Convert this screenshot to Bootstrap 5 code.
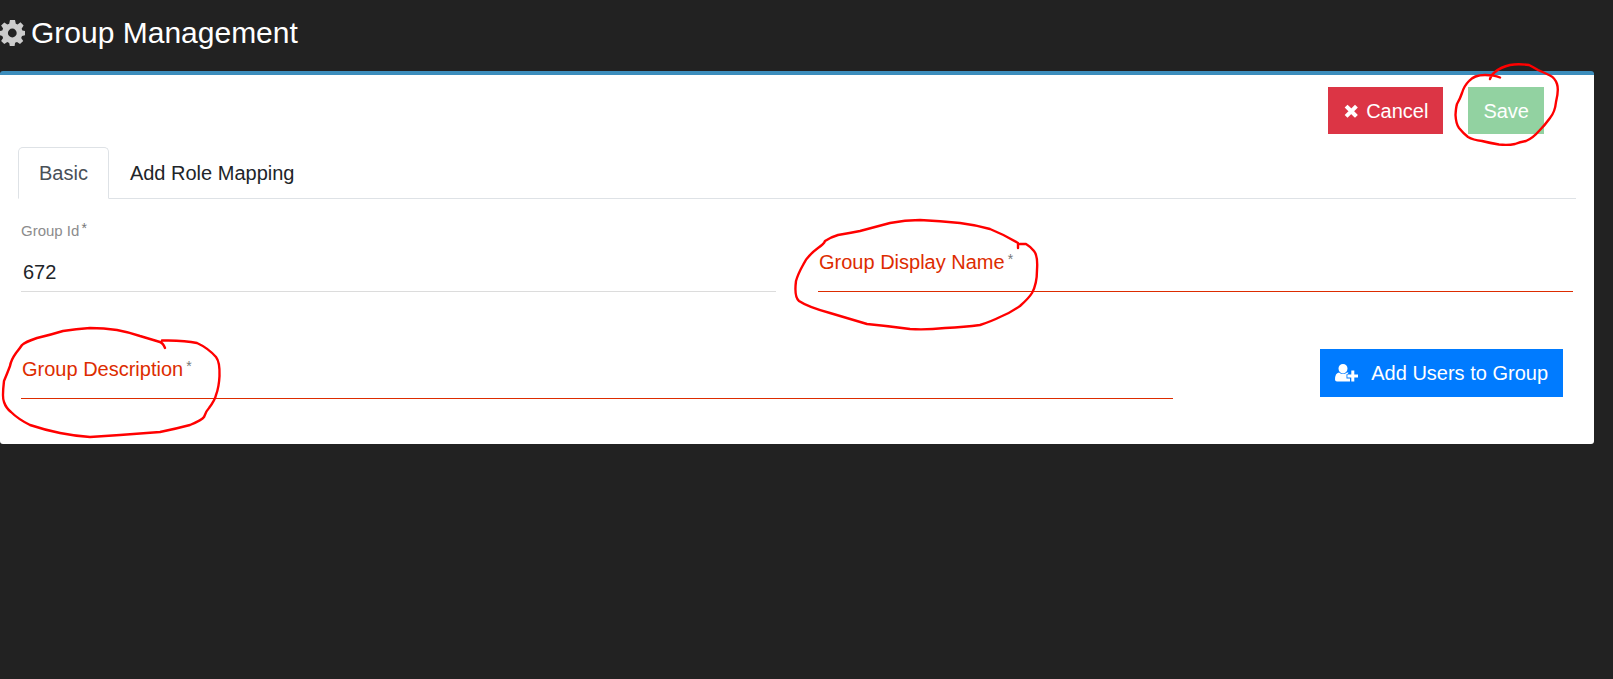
<!DOCTYPE html>
<html lang="en">
<head>
<meta charset="utf-8">
<meta name="viewport" content="width=device-width, initial-scale=1">
<title>Group Management</title>
<link href="https://cdn.jsdelivr.net/npm/bootstrap@5.3.0/dist/css/bootstrap.min.css" rel="stylesheet">
<style>
  body { background: #222; font-family: "Liberation Sans", Arial, sans-serif; font-size: 20px; line-height: 30px; color: #212529; overflow-x: hidden; }
  .page-title { font-size: 30px; line-height: 40px; color: #fff; padding: 13px 0 18px; gap: 6px; }
  .panel { background: #fff; border-top: 4px solid #3c8dbc; border-radius: 3px; margin-right: 19px; padding: 12px 18px 45px; }
  .toolbar { gap: 25px; padding-right: 32px; margin-bottom: 13px; }
  .btn { --bs-btn-font-size: 20px; --bs-btn-line-height: 30px; --bs-btn-padding-x: 14px; --bs-btn-padding-y: 8px; --bs-btn-border-radius: 0; }
  .toolbar .btn { height: 47px; }
  .btn-danger { --bs-btn-bg: #dc3545; --bs-btn-border-color: #dc3545; gap: 7px; }
  .btn-success { --bs-btn-disabled-bg: #28a745; --bs-btn-disabled-border-color: #28a745; --bs-btn-disabled-opacity: .5; }
  .btn-primary { --bs-btn-bg: #007bff; --bs-btn-border-color: #007bff; }
  .nav-tabs { --bs-nav-link-padding-x: 20px; --bs-nav-link-padding-y: 10px; --bs-nav-link-color: #212529; --bs-nav-tabs-border-radius: 5px; --bs-nav-tabs-link-active-color: #495057; }
  .fields { padding: 0 3px; }
  .pair { gap: 42px; }
  .field { padding-top: 57px; }
  .field input { display: block; width: 100%; height: 36px; padding: 0 2px 2px; border: 0; border-bottom: 1px solid #dcdcdc; background: none; outline: 0; color: #212529; }
  .field label { position: absolute; left: 1px; top: 48px; color: #dd2c00; }
  .field label.floated { left: 0; top: 17px; font-size: 15px; color: #8c8c8c; }
  .field .missing { border-color: #dd2c00; }
  .req { font-size: 14px; line-height: 1; vertical-align: 5px; color: #777; margin-left: 3px; }
  .floated .req { vertical-align: 3px; margin-left: 2px; }
  .description-row { margin-top: 14px; }
  .description { flex: 0 0 74.25%; }
  .add-users { margin: 0 10px 2px 0; }
  .pen { position: absolute; pointer-events: none; overflow: visible; fill: none; stroke: #f00; stroke-width: 2.4; stroke-linejoin: round; stroke-linecap: round; }
  .pen-save { left: -18px; top: -27px; }
  .pen-name { left: -28px; top: 10px; }
  .pen-description { left: -21px; top: 14px; }
</style>
</head>
<body>
<header>
  <h1 class="page-title d-flex align-items-center m-0 fw-normal">
    <svg width="25" height="26" viewBox="0 0 25 26" fill="#ccc" aria-hidden="true"><path fill-rule="evenodd" d="M10 0h5l.8 3.700 1.800.8L20.500 2.300l3.100 3.300-2 3.200.8 1.700 2.600.6v4.200l-3 .7-.8 1.900 2 3.100-3.200 3-3-2-1.900.8L14.600 26h-4.800l-.6-3.100-1.900-.8-3 1.900-3.200-3 2-3.100-.8-2-2.300-.6v-4.200l2.300-.6.8-1.900-2-3 3.200-3.100 3 2 1.900-.8zM12.300 8.600a4.400 4.400 0 1 0 0 8.800a4.400 4.400 0 1 0 0-8.800z"/></svg>
    Group Management
  </h1>
</header>
<main class="panel">
  <div class="toolbar d-flex justify-content-end">
    <button type="button" class="btn btn-danger d-flex align-items-center"><svg width="16" height="14" viewBox="0 0 16 14" aria-hidden="true"><path d="M4.500 3.500l7.500 7.500M12 3.500l-7.500 7.500" stroke="#fff" stroke-width="4" stroke-linecap="square"/></svg>Cancel</button>
    <div class="position-relative">
      <button type="button" class="btn btn-success" disabled>Save</button>
      <svg class="pen pen-save" width="115" height="90" viewBox="1450 60 115 90" aria-hidden="true"><path d="M1500 77.500Q1494 75 1485 75Q1474 75 1469 81Q1464 86 1462 93Q1460 99 1457 104Q1456 107 1455.500 115Q1456 124 1459 128Q1463 133 1468 137Q1473 140 1482 141Q1490 143 1499 144.500Q1508 145.500 1515 144Q1520 142 1526 141Q1533 138 1539 131Q1545 125 1550 118Q1555 112 1556 102Q1559 90 1557 84Q1555 78 1550 75.500Q1545 73 1538 70Q1533 67 1529 65Q1518 63.500 1510 65Q1501 67 1495 72Q1491 75 1490 79"/></svg>
    </div>
  </div>
  <ul class="nav nav-tabs">
    <li class="nav-item"><a class="nav-link active" aria-current="page" href="#basic">Basic</a></li>
    <li class="nav-item"><a class="nav-link" href="#roles">Add Role Mapping</a></li>
  </ul>
  <form class="fields" id="basic">
    <div class="pair d-flex">
      <div class="field position-relative flex-fill w-50">
        <label class="floated" for="group-id">Group Id<span class="req">*</span></label>
        <input id="group-id" type="text" value="672">
      </div>
      <div class="field position-relative flex-fill w-50">
        <label for="group-name">Group Display Name<span class="req">*</span></label>
        <input class="missing" id="group-name" type="text">
        <svg class="pen pen-name" width="260" height="130" viewBox="790 209 260 130" aria-hidden="true"><path d="M1018 248L1018 243Q1005 235 990 229Q976 225 960 223Q940 221 920 220Q905 220 890 223Q875 227 860 231Q850 233 838 235Q831 237 825 241Q824 244 818 248Q807 256 803 265Q798 274 796 281Q794 297 799 301Q808 307 830 313L867 324Q888 326 910 329Q926 330 945 328Q965 327 980 325Q992 321 1000 317Q1010 313 1020 306Q1029 298 1032 293Q1037 284 1037 270Q1038 256 1034 251Q1031 247 1026 244L1020 244"/></svg>
      </div>
    </div>
    <div class="description-row d-flex justify-content-between align-items-end">
      <div class="field description position-relative">
        <label for="group-description">Group Description<span class="req">*</span></label>
        <input class="missing" id="group-description" type="text">
        <svg class="pen pen-description" width="230" height="120" viewBox="0 320 230 120" aria-hidden="true"><path d="M165 348Q163 343 160 342L140 336Q128 332 117 330Q104 328 90 328Q76 329 63 331Q50 335 37 338Q25 342 22 345Q20 348 16 353Q11 360 10 366Q7 374 4 381Q2 398 4 402Q6 408 11 412Q18 419 30 425Q45 430 60 433Q75 436 90 437Q105 436 120 435L160 432Q175 429 190 425Q202 420 204 417Q206 411 209 408Q215 400 216 395Q219 387 219.500 376Q220 362 216 357Q208 348 197 343Q184 340 162 340.500"/></svg>
      </div>
      <button type="button" class="btn btn-primary add-users d-flex align-items-center"><svg width="24" height="18" viewBox="0 0 24 18" fill="#fff" aria-hidden="true"><path d="M8 0a4.500 4.500 0 0 1 4.500 4.600C12.500 7.500 10.500 9.400 8 9.400S3.500 7.500 3.500 4.600A4.500 4.500 0 0 1 8 0zM4 8.400q4 3.400 8 0h1.500q-.5 2-2 1.800v4.200H15V17.500H2Q0 17.500 0 15.500Q0 9 4 8.400zM16.300 6.500h3v3.900H23v3h-3.700V17.500h-3v-4.100h-3.900v-3h3.900z"/></svg><span class="ms-2 ps-1">Add Users to Group</span></button>
    </div>
  </form>
</main>
<script src="https://cdn.jsdelivr.net/npm/bootstrap@5.3.0/dist/js/bootstrap.bundle.min.js"></script>
</body>
</html>
